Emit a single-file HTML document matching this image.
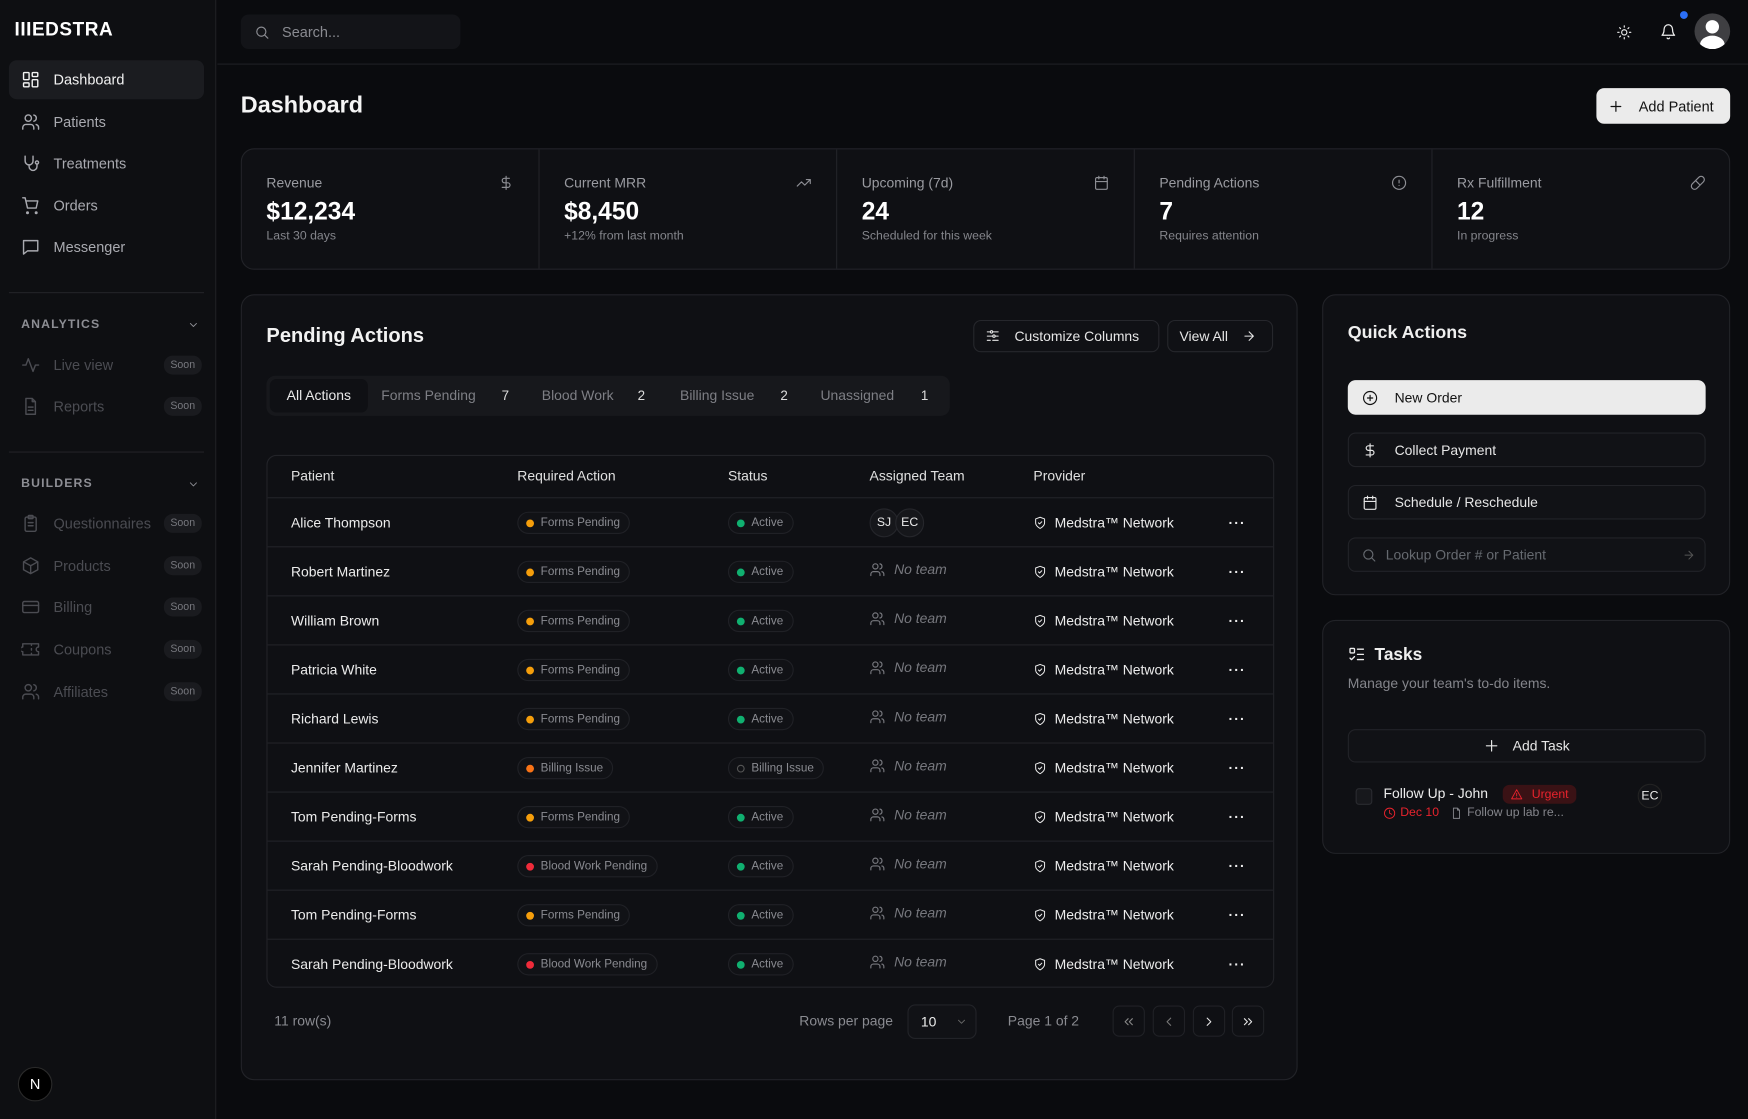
<!DOCTYPE html>
<html><head><meta charset="utf-8">
<style>
*{box-sizing:border-box;margin:0;padding:0}
html,body{width:1748px;height:1119px;overflow:hidden;background:#0a0b0e}
#w{position:absolute;left:0;top:0;width:1568px;height:1004px;transform:scale(1.11480);transform-origin:0 0;font-family:"Liberation Sans",sans-serif;color:#ececec;background:#0a0b0e}
.a{position:absolute}
svg{fill:none;stroke:currentColor;stroke-width:1.8;stroke-linecap:round;stroke-linejoin:round}
.side{left:0;top:0;width:194px;height:1004px;background:#0e0f12;border-right:1px solid #1f2024}
.nav{position:absolute;left:8px;width:175px;height:35px;border-radius:7px;font-size:13px;color:#a9aab0;display:flex;align-items:center;padding-left:11px}
.nav svg{width:17px;height:17px;margin-right:12px}
.nav.dim{color:#4b4c52}
.soon{position:absolute;right:2px;font-size:9.5px;color:#77787e;background:#1a1b1f;border-radius:8px;padding:3px 6px}
.sec{position:absolute;left:19px;font-size:11px;letter-spacing:1px;color:#8d8e94;font-weight:bold}
.hr{position:absolute;left:8px;width:175px;height:1px;background:#222327}
.card{position:absolute;background:#0f1014;border:1px solid #222328;border-radius:12px}
.stat{position:absolute;top:0;height:108px;width:267px;border-right:1px solid #222328}
.stat .l{position:absolute;left:22px;top:23px;font-size:12.5px;color:#9a9ba1}
.stat .v{position:absolute;left:22px;top:43px;font-size:22px;font-weight:bold;color:#fff}
.stat .s{position:absolute;left:22px;top:72px;font-size:11px;color:#84858b}
.stat svg{position:absolute;right:22px;top:23px;width:14px;height:14px;color:#8d8e94}
.btn{position:absolute;border:1px solid #26272c;border-radius:7px;font-size:12.5px;color:#e6e6e6;display:flex;align-items:center;background:#101115}
.row{position:absolute;left:0;width:902px;height:44px;border-top:1px solid #222328;font-size:12.5px}
.row>*{position:absolute;top:0;height:43px;display:flex;align-items:center}
.pill{height:20px!important;top:12px!important;border:1px solid #202126;border-radius:10px;padding:0 8px 0 7px;font-size:10.5px;color:#8a8b91;background:#111216}
.dot{width:7px;height:7px;border-radius:50%;margin-right:6px}
.nt{color:#77787e;font-style:italic}
.nt svg{width:14px;height:14px;margin-right:8px;font-style:normal}
.qa{position:absolute;left:22px;width:321px;height:31px;border:1px solid #222328;border-radius:7px;font-size:12.5px;display:flex;align-items:center;padding-left:12px;background:#111216;color:#e6e6e6}
.qa svg{width:14px;height:14px;margin-right:15px}
.pg{position:absolute;top:902px;width:29px;height:28px;border:1px solid #202126;border-radius:6px;display:flex;align-items:center;justify-content:center;color:#e6e6e6}
.pg svg{width:13px;height:13px}
</style></head><body><div id="w">

<div class="a side">
  <div class="a" style="left:13px;top:17px;font-size:17px;font-weight:bold;letter-spacing:0.5px;color:#fff">IIIEDSTRA</div>
  <div class="nav" style="top:54px;background:#1b1c20;color:#f2f2f2"><svg viewBox="0 0 24 24"><rect x="3" y="3" width="7" height="9" rx="1"/><rect x="14" y="3" width="7" height="5" rx="1"/><rect x="14" y="12" width="7" height="9" rx="1"/><rect x="3" y="16" width="7" height="5" rx="1"/></svg>Dashboard</div>
  <div class="nav" style="top:92px"><svg viewBox="0 0 24 24"><circle cx="9" cy="7" r="4"/><path d="M2 21v-2a4 4 0 0 1 4-4h6a4 4 0 0 1 4 4v2M16 3.1a4 4 0 0 1 0 7.8M22 21v-2a4 4 0 0 0-3-3.9"/></svg>Patients</div>
  <div class="nav" style="top:129px"><svg viewBox="0 0 24 24"><path d="M5 3v6a5 5 0 0 0 10 0V3M10 14v2a5 5 0 0 0 10 0v-3"/><circle cx="20" cy="11" r="2"/></svg>Treatments</div>
  <div class="nav" style="top:167px"><svg viewBox="0 0 24 24"><circle cx="8" cy="21" r="1"/><circle cx="19" cy="21" r="1"/><path d="M2 2h3l3 13h11l2-9H6"/></svg>Orders</div>
  <div class="nav" style="top:204px"><svg viewBox="0 0 24 24"><path d="M3 4h18v13H8l-5 4z"/></svg>Messenger</div>
  <div class="hr" style="top:262px"></div>
  <div class="sec" style="top:285px">ANALYTICS</div>
  <svg class="a" style="left:168px;top:286px;width:11px;height:11px;color:#8d8e94" viewBox="0 0 24 24"><path d="M6 9l6 6 6-6"/></svg>
  <div class="nav dim" style="top:310px"><svg viewBox="0 0 24 24"><path d="M2 12h4l3-8 6 16 3-8h4"/></svg>Live view<span class="soon">Soon</span></div>
  <div class="nav dim" style="top:347px"><svg viewBox="0 0 24 24"><path d="M14 2H6v20h12V6zM14 2v4h4M9 13h6M9 17h6"/></svg>Reports<span class="soon">Soon</span></div>
  <div class="hr" style="top:405px"></div>
  <div class="sec" style="top:428px">BUILDERS</div>
  <svg class="a" style="left:168px;top:429px;width:11px;height:11px;color:#8d8e94" viewBox="0 0 24 24"><path d="M6 9l6 6 6-6"/></svg>
  <div class="nav dim" style="top:452px"><svg viewBox="0 0 24 24"><rect x="5" y="4" width="14" height="18" rx="2"/><rect x="9" y="2" width="6" height="4" rx="1"/><path d="M9 11h6M9 15h6"/></svg>Questionnaires<span class="soon">Soon</span></div>
  <div class="nav dim" style="top:490px"><svg viewBox="0 0 24 24"><path d="M12 2l9 5v10l-9 5-9-5V7zM3 7l9 5 9-5M12 12v10"/></svg>Products<span class="soon">Soon</span></div>
  <div class="nav dim" style="top:527px"><svg viewBox="0 0 24 24"><rect x="2" y="5" width="20" height="14" rx="2"/><path d="M2 10h20"/></svg>Billing<span class="soon">Soon</span></div>
  <div class="nav dim" style="top:565px"><svg viewBox="0 0 24 24"><path d="M2 9a3 3 0 0 0 0 6v4h20v-4a3 3 0 0 1 0-6V5H2zM13 5v2M13 11v2M13 17v2"/></svg>Coupons<span class="soon">Soon</span></div>
  <div class="nav dim" style="top:603px"><svg viewBox="0 0 24 24"><circle cx="9" cy="7" r="4"/><path d="M2 21v-2a4 4 0 0 1 4-4h6a4 4 0 0 1 4 4v2M16 3.1a4 4 0 0 1 0 7.8M22 21v-2a4 4 0 0 0-3-3.9"/></svg>Affiliates<span class="soon">Soon</span></div>
  <div class="a" style="left:16px;top:957px;width:31px;height:31px;border-radius:50%;background:#000;border:1px solid #2a2a2a;color:#fff;font-size:13px;display:flex;align-items:center;justify-content:center">N</div>
</div>

<div class="a" style="left:195px;top:57px;width:1373px;height:1px;background:#1f2024"></div>
<div class="a" style="left:216px;top:13px;width:197px;height:31px;background:#131418;border-radius:7px;font-size:13px;color:#8a8b91;display:flex;align-items:center;padding-left:12px"><svg style="width:14px;height:14px;margin-right:11px" viewBox="0 0 24 24"><circle cx="11" cy="11" r="7"/><path d="M21 21l-5-5"/></svg>Search...</div>
<svg class="a" style="left:1450px;top:22px;width:14px;height:14px" viewBox="0 0 24 24"><circle cx="12" cy="12" r="4"/><path d="M12 2v2M12 20v2M4.9 4.9l1.4 1.4M17.7 17.7l1.4 1.4M2 12h2M20 12h2M4.9 19.1l1.4-1.4M17.7 6.3l1.4-1.4"/></svg>
<svg class="a" style="left:1489px;top:21px;width:15px;height:15px" viewBox="0 0 24 24"><path d="M6 8a6 6 0 0 1 12 0c0 7 3 9 3 9H3s3-2 3-9M10.3 21a1.9 1.9 0 0 0 3.4 0"/></svg>
<div class="a" style="left:1507px;top:10px;width:7px;height:7px;border-radius:50%;background:#2b6ff7"></div>
<div class="a" style="left:1520px;top:12px;width:32px;height:32px;border-radius:50%;background:#3f3f42;overflow:hidden"><div class="a" style="left:10px;top:6px;width:12px;height:12px;border-radius:50%;background:#fff"></div><div class="a" style="left:5px;top:20px;width:22px;height:16px;border-radius:50%;background:#fff"></div></div>

<div class="a" style="left:216px;top:83px;font-size:21px;font-weight:bold;color:#f5f5f5">Dashboard</div>
<div class="a" style="left:1432px;top:79px;width:120px;height:32px;background:#ebebeb;border-radius:7px;color:#111;font-size:13px;display:flex;align-items:center;padding-left:11px"><svg style="width:13px;height:13px;margin-right:14px;stroke-width:2" viewBox="0 0 24 24"><path d="M12 4v16M4 12h16"/></svg>Add Patient</div>

<div class="card" style="left:216px;top:133px;width:1336px;height:109px;overflow:hidden">
  <div class="stat" style="left:0"><div class="l">Revenue</div><div class="v">$12,234</div><div class="s">Last 30 days</div><svg viewBox="0 0 24 24"><path d="M12 2v20M17 5H9.5a3.5 3.5 0 0 0 0 7h5a3.5 3.5 0 0 1 0 7H6"/></svg></div>
  <div class="stat" style="left:267px"><div class="l">Current MRR</div><div class="v">$8,450</div><div class="s">+12% from last month</div><svg viewBox="0 0 24 24"><path d="M22 7l-8.5 8.5-5-5L2 17M16 7h6v6"/></svg></div>
  <div class="stat" style="left:534px"><div class="l">Upcoming (7d)</div><div class="v">24</div><div class="s">Scheduled for this week</div><svg viewBox="0 0 24 24"><rect x="3" y="4" width="18" height="18" rx="2"/><path d="M16 2v4M8 2v4M3 10h18"/></svg></div>
  <div class="stat" style="left:801px"><div class="l">Pending Actions</div><div class="v">7</div><div class="s">Requires attention</div><svg viewBox="0 0 24 24"><circle cx="12" cy="12" r="10"/><path d="M12 8v4M12 16h.01"/></svg></div>
  <div class="stat" style="left:1068px;border:none"><div class="l">Rx Fulfillment</div><div class="v">12</div><div class="s">In progress</div><svg viewBox="0 0 24 24"><path d="M10.5 20.5l10-10a4.95 4.95 0 1 0-7-7l-10 10a4.95 4.95 0 1 0 7 7zM8.5 8.5l7 7"/></svg></div>
</div>

<div class="card" style="left:216px;top:264px;width:948px;height:705px">
  <div class="a" style="left:22px;top:26px;font-size:18px;font-weight:bold;color:#f2f2f2">Pending Actions</div>
  <div class="btn" style="left:656px;top:22px;width:167px;height:29px;padding-left:10px"><svg style="width:13px;height:13px;margin-right:13px" viewBox="0 0 24 24"><path d="M21 5h-9M8 5H3M21 12h-5M12 12H3M21 19h-9M8 19H3"/><circle cx="10" cy="5" r="2"/><circle cx="14" cy="12" r="2"/></svg>Customize Columns</div>
  <div class="btn" style="left:830px;top:22px;width:95px;height:29px;padding-left:10px">View All<svg style="width:13px;height:13px;margin-left:12px" viewBox="0 0 24 24"><path d="M5 12h14M12 5l7 7-7 7"/></svg></div>
  <div class="a" style="left:22px;top:72px;width:613px;height:36px;background:#17181c;border-radius:8px;font-size:12.5px;color:#7e7f85">
    <div class="a" style="left:3px;top:3px;width:88px;height:30px;background:#0f1014;border-radius:6px;color:#eaeaea;display:flex;align-items:center;justify-content:center">All Actions</div>
    <div class="a" style="left:103px;top:11px">Forms Pending</div><div class="a" style="left:211px;top:11px;color:#ddd;font-size:12px">7</div>
    <div class="a" style="left:247px;top:11px">Blood Work</div><div class="a" style="left:333px;top:11px;color:#ddd;font-size:12px">2</div>
    <div class="a" style="left:371px;top:11px">Billing Issue</div><div class="a" style="left:461px;top:11px;color:#ddd;font-size:12px">2</div>
    <div class="a" style="left:497px;top:11px">Unassigned</div><div class="a" style="left:587px;top:11px;color:#ddd;font-size:12px">1</div>
  </div>
  <div class="a" style="left:22px;top:143px;width:904px;height:478px;border:1px solid #222328;border-radius:9px;overflow:hidden">
    <div class="a" style="top:0;left:0;width:902px;height:37px;font-size:12.5px;color:#e0e0e0">
      <span class="a" style="left:21px;top:11px">Patient</span><span class="a" style="left:224px;top:11px">Required Action</span><span class="a" style="left:413px;top:11px">Status</span><span class="a" style="left:540px;top:11px">Assigned Team</span><span class="a" style="left:687px;top:11px">Provider</span>
    </div>
    <div id="rows"></div>
  </div>
  <div class="a" style="left:29px;top:644px;font-size:12.5px;color:#8a8b91">11 row(s)</div>
  <div class="a" style="left:500px;top:644px;font-size:12.5px;color:#8a8b91">Rows per page</div>
  <div class="a" style="left:597px;top:636px;width:62px;height:31px;border:1px solid #222328;border-radius:7px;background:#111216;font-size:12.5px;display:flex;align-items:center;padding-left:11px">10<svg style="width:11px;height:11px;margin-left:17px;color:#666" viewBox="0 0 24 24"><path d="M6 9l6 6 6-6"/></svg></div>
  <div class="a" style="left:687px;top:644px;font-size:12.5px;color:#8a8b91">Page 1 of 2</div>
</div>
<div class="pg" style="left:998px;color:#888"><svg viewBox="0 0 24 24"><path d="M11 17l-5-5 5-5M18 17l-5-5 5-5"/></svg></div>
<div class="pg" style="left:1034px;color:#777"><svg viewBox="0 0 24 24"><path d="M15 18l-6-6 6-6"/></svg></div>
<div class="pg" style="left:1070px"><svg viewBox="0 0 24 24"><path d="M9 18l6-6-6-6"/></svg></div>
<div class="pg" style="left:1105px"><svg viewBox="0 0 24 24"><path d="M6 17l5-5-5-5M13 17l5-5-5-5"/></svg></div>

<div class="card" style="left:1186px;top:264px;width:366px;height:270px">
  <div class="a" style="left:22px;top:25px;font-size:16px;font-weight:bold;color:#efefef">Quick Actions</div>
  <div class="qa" style="top:76px;background:#ebebeb;color:#111;border-color:#ebebeb"><svg viewBox="0 0 24 24"><circle cx="12" cy="12" r="10"/><path d="M12 8v8M8 12h8"/></svg>New Order</div>
  <div class="qa" style="top:123px"><svg viewBox="0 0 24 24"><path d="M12 2v20M17 5H9.5a3.5 3.5 0 0 0 0 7h5a3.5 3.5 0 0 1 0 7H6"/></svg>Collect Payment</div>
  <div class="qa" style="top:170px"><svg viewBox="0 0 24 24"><rect x="3" y="4" width="18" height="18" rx="2"/><path d="M16 2v4M8 2v4M3 10h18"/></svg>Schedule / Reschedule</div>
  <div class="qa" style="top:217px;color:#666a70;padding-left:11px"><svg style="margin-right:8px" viewBox="0 0 24 24"><circle cx="11" cy="11" r="7"/><path d="M21 21l-5-5"/></svg>Lookup Order # or Patient<svg style="position:absolute;right:8px;width:12px;height:12px;margin:0;color:#555" viewBox="0 0 24 24"><path d="M5 12h14M12 5l7 7-7 7"/></svg></div>
</div>

<div class="card" style="left:1186px;top:556px;width:366px;height:210px">
  <svg class="a" style="left:22px;top:22px;width:16px;height:16px" viewBox="0 0 24 24"><rect x="3" y="4" width="6" height="6" rx="1"/><path d="M3 17l2 2 4-4M13 5h8M13 12h8M13 19h8"/></svg>
  <div class="a" style="left:46px;top:22px;font-size:15.5px;font-weight:bold;color:#efefef">Tasks</div>
  <div class="a" style="left:22px;top:49px;font-size:12.5px;color:#84858b">Manage your team's to-do items.</div>
  <div class="qa" style="top:97px;height:30px;justify-content:center;padding-left:0"><svg style="margin-right:12px" viewBox="0 0 24 24"><path d="M12 4v16M4 12h16"/></svg>Add Task</div>
  <div class="a" style="left:29px;top:150px;width:15px;height:15px;border:1px solid #2a2b30;border-radius:3px;background:#17181c"></div>
  <div class="a" style="left:54px;top:148px;font-size:12.5px;color:#ececec">Follow Up - John</div>
  <div class="a" style="left:161px;top:147px;height:17px;padding:0 7px;border-radius:6px;background:#3a1215;color:#e8232d;font-size:11px;display:flex;align-items:center"><svg style="width:11px;height:11px;margin-right:8px" viewBox="0 0 24 24"><path d="M12 3L2 21h20zM12 10v5M12 18h.01"/></svg>Urgent</div>
  <div class="a" style="left:54px;top:166px;font-size:11px;color:#e8232d;display:flex;align-items:center"><svg style="width:11px;height:11px;margin-right:4px" viewBox="0 0 24 24"><circle cx="12" cy="12" r="10"/><path d="M12 6v6l4 2"/></svg>Dec 10</div>
  <div class="a" style="left:114px;top:166px;font-size:11px;color:#84858b;display:flex;align-items:center"><svg style="width:11px;height:11px;margin-right:4px" viewBox="0 0 24 24"><path d="M14 2H6v20h12V6zM14 2v4h4"/></svg>Follow up lab re...</div>
  <div class="a" style="left:282px;top:146px;width:22px;height:22px;border-radius:50%;background:#121317;border:1px solid #222;font-size:11px;display:flex;align-items:center;justify-content:center">EC</div>
</div>

</div>
<script>
var data=[["Alice Thompson","Forms Pending","#f59e0b",1],["Robert Martinez","Forms Pending","#f59e0b",0],["William Brown","Forms Pending","#f59e0b",0],["Patricia White","Forms Pending","#f59e0b",0],["Richard Lewis","Forms Pending","#f59e0b",0],["Jennifer Martinez","Billing Issue","#f97316",2],["Tom Pending-Forms","Forms Pending","#f59e0b",0],["Sarah Pending-Bloodwork","Blood Work Pending","#ef2b3a",0],["Tom Pending-Forms","Forms Pending","#f59e0b",0],["Sarah Pending-Bloodwork","Blood Work Pending","#ef2b3a",0]];
var ppl='<svg viewBox="0 0 24 24"><circle cx="9" cy="7" r="4"/><path d="M2 21v-2a4 4 0 0 1 4-4h6a4 4 0 0 1 4 4v2M16 3.1a4 4 0 0 1 0 7.8M22 21v-2a4 4 0 0 0-3-3.9"/></svg>';
var h='';
data.forEach(function(d,i){
 var st=d[3]==2?'<span class="pill" style="left:413px"><span class="dot" style="border:1px solid #555;width:7px;height:7px"></span>Billing Issue</span>':'<span class="pill" style="left:413px"><span class="dot" style="background:#10b070"></span>Active</span>';
 var tm=d[3]==1?'<span style="left:540px"><span style="width:26px;height:26px;border-radius:50%;background:#16171b;border:1px solid #25262b;font-size:11px;display:flex;align-items:center;justify-content:center">SJ</span><span style="width:26px;height:26px;margin-left:-3px;border-radius:50%;background:#16171b;border:1px solid #25262b;font-size:11px;display:flex;align-items:center;justify-content:center">EC</span></span>':'<span class="nt" style="left:540px;top:-2px">'+ppl+'No team</span>';
 h+='<div class="row" style="top:'+(37+i*44)+'px"><span style="left:21px">'+d[0]+'</span><span class="pill" style="left:224px"><span class="dot" style="background:'+d[2]+'"></span>'+d[1]+'</span>'+st+tm+'<span style="left:687px"><svg style="width:12px;height:12px;margin-right:7px" viewBox="0 0 24 24"><path d="M12 22s8-4 8-10V5l-8-3-8 3v7c0 6 8 10 8 10z"/><path d="M9 12l2 2 4-4"/></svg>Medstra™ Network</span><span style="left:862px;font-weight:bold;letter-spacing:1px">···</span></div>';
});
document.getElementById('rows').innerHTML=h;
</script>
</body></html>
